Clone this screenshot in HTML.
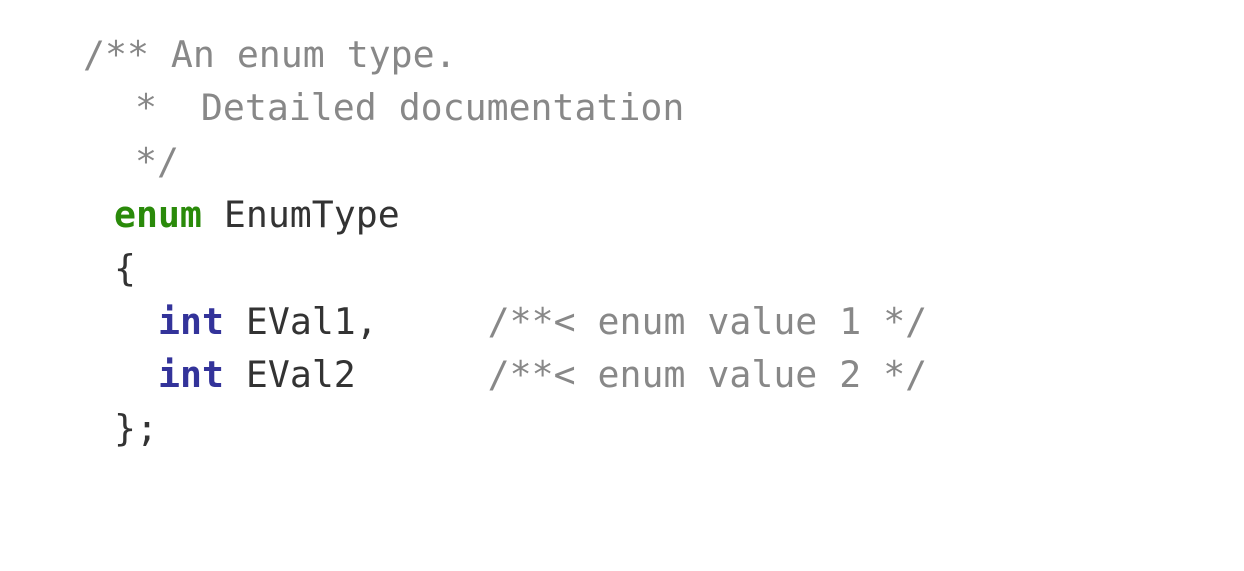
<!DOCTYPE html>
<html><head><meta charset="utf-8"><style>
html,body{margin:0;padding:0;background:#fff;width:1244px;height:571px;overflow:hidden}
.c{position:absolute;top:28px;left:0;font-family:"DejaVu Sans Mono","Liberation Mono",monospace;font-size:36.5px;line-height:53.4px;color:#333}
.c div{height:53.4px;white-space:pre}
.g{color:#888}
.k{color:#2a8a0a;font-weight:bold}
.t{color:#33339a;font-weight:bold}
</style></head><body>
<div class="c"><div class="g" style="margin-left:83px">/** An enum type.</div><div class="g" style="margin-left:135px">*  Detailed documentation</div><div class="g" style="margin-left:135px">*/</div><div style="margin-left:114px"><span class="k">enum</span> EnumType</div><div style="margin-left:114px">{</div><div style="margin-left:158px"><span class="t">int</span> EVal1,     <span class="g">/**&lt; enum value 1 */</span></div><div style="margin-left:158px"><span class="t">int</span> EVal2      <span class="g">/**&lt; enum value 2 */</span></div><div style="margin-left:114px">};</div></div>
</body></html>
